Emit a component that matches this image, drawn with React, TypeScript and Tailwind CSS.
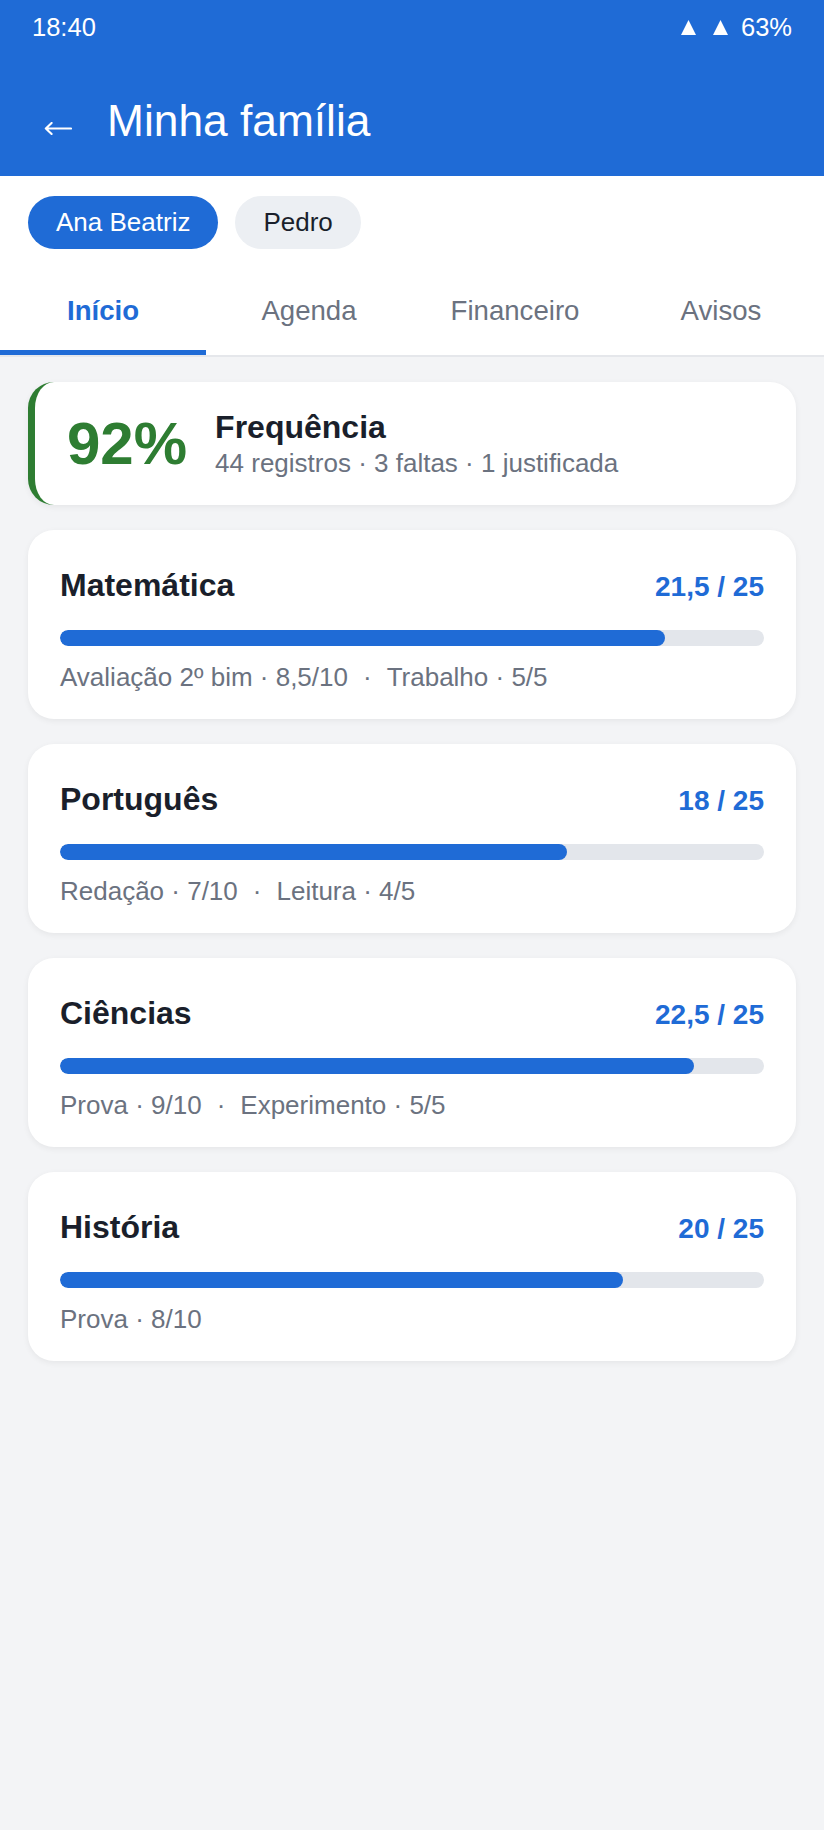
import React from "react";

type Subject = {
  name: string;
  score: string;
  pct: number;
  items: string[];
};

const subjects: Subject[] = [
  { name: "Matemática", score: "21,5 / 25", pct: 86, items: ["Avaliação 2º bim · 8,5/10", "Trabalho · 5/5"] },
  { name: "Português", score: "18 / 25", pct: 72, items: ["Redação · 7/10", "Leitura · 4/5"] },
  { name: "Ciências", score: "22,5 / 25", pct: 90, items: ["Prova · 9/10", "Experimento · 5/5"] },
  { name: "História", score: "20 / 25", pct: 80, items: ["Prova · 8/10"] },
];

function Tri() {
  return (
    <svg width="15" height="15" viewBox="0 0 15 15">
      <polygon points="7.5,0 15,15 0,15" fill="#ffffff" />
    </svg>
  );
}

function SubjectCard({ s }: { s: Subject }) {
  return (
    <div className="bg-white rounded-[26px] shadow-[0_2px_6px_rgba(0,0,0,0.06)] px-[32px] pt-[33px] pb-[24px]">
      <div className="flex items-baseline justify-between">
        <div className="text-[32px] leading-[44px] font-bold text-[#1a1f2b]">{s.name}</div>
        <div className="text-[28px] leading-[44px] font-bold text-[#1f6bd6]">{s.score}</div>
      </div>
      <div className="mt-[21px] h-[16px] rounded-full bg-[#e3e6eb] overflow-hidden">
        <div className="h-full rounded-full bg-[#1f6bd6]" style={{ width: `${s.pct}%` }} />
      </div>
      <div className="mt-[13px] text-[26px] leading-[36px] text-[#6b7280] whitespace-nowrap">
        {s.items.map((it, i) => (
          <React.Fragment key={i}>
            {i > 0 && <span className="mx-[15px]">·</span>}
            <span>{it}</span>
          </React.Fragment>
        ))}
      </div>
    </div>
  );
}

export default function App() {
  const tabs = ["Início", "Agenda", "Financeiro", "Avisos"];
  return (
    <div
      className="w-[824px] min-h-[1830px] bg-[#f3f4f6]"
      style={{ fontFamily: '"Liberation Sans", Arial, sans-serif' }}
    >
      {/* Header */}
      <div className="bg-[#1f6bd6] text-white">
        <div className="h-[54px] flex items-center justify-between pl-[32px] pr-[32px]">
          <span className="text-[25.5px]">18:40</span>
          <div className="flex items-center">
            <Tri />
            <span className="w-[17px]" />
            <Tri />
            <span className="ml-[13px] text-[25.5px]">63%</span>
          </div>
        </div>
        <div className="flex items-start pl-[44px] pt-[42px] pb-[30px]">
          <svg width="28" height="13" viewBox="0 0 28 13" className="mt-[26px] shrink-0">
            <path
              d="M27 6.5 H1.8 M7.6 0.9 L1.8 6.5 L7.6 12.1"
              fill="none"
              stroke="#ffffff"
              strokeWidth="2.1"
              strokeLinecap="round"
              strokeLinejoin="round"
            />
          </svg>
          <h1 className="ml-[35px] text-[44.3px] leading-[50px] font-normal">Minha família</h1>
        </div>
      </div>

      {/* Chips */}
      <div className="bg-white">
        <div className="flex items-center gap-[17px] px-[28px] pt-[20px] pb-[24px]">
          <button className="h-[53px] px-[28px] rounded-full bg-[#1f6bd6] text-white text-[26px]">
            Ana Beatriz
          </button>
          <button className="h-[53px] px-[28px] rounded-full bg-[#eceff3] text-[#1a1f2b] text-[26px]">
            Pedro
          </button>
        </div>

        {/* Tabs */}
        <div className="grid grid-cols-4 border-b-2 border-[#e5e7eb]">
          {tabs.map((t, i) => (
            <div key={t} className="flex flex-col items-center">
              <div
                className={
                  "pt-[21px] pb-[22px] text-[27.6px] leading-[34px] " +
                  (i === 0 ? "font-bold text-[#1f6bd6]" : "text-[#6b7280]")
                }
              >
                {t}
              </div>
              <div className={"h-[5px] w-full " + (i === 0 ? "bg-[#1f6bd6]" : "bg-transparent")} />
            </div>
          ))}
        </div>
      </div>

      {/* Content */}
      <div className="px-[28px] pt-[25px] pb-[40px] flex flex-col gap-[25px]">
        <div className="h-[123px] bg-white rounded-[26px] border-l-[7px] border-[#2e7d32] shadow-[0_2px_6px_rgba(0,0,0,0.06)] flex items-center pl-[32px]">
          <div className="text-[60px] leading-[60px] font-bold text-[#2e7d32]">92%</div>
          <div className="ml-[28px] flex flex-col">
            <div className="text-[32px] leading-[38px] font-bold text-[#1a1f2b]">Frequência</div>
            <div className="text-[26px] leading-[34px] text-[#6b7280]">
              44 registros · 3 faltas · 1 justificada
            </div>
          </div>
        </div>

        {subjects.map((s) => (
          <SubjectCard key={s.name} s={s} />
        ))}
      </div>
    </div>
  );
}
